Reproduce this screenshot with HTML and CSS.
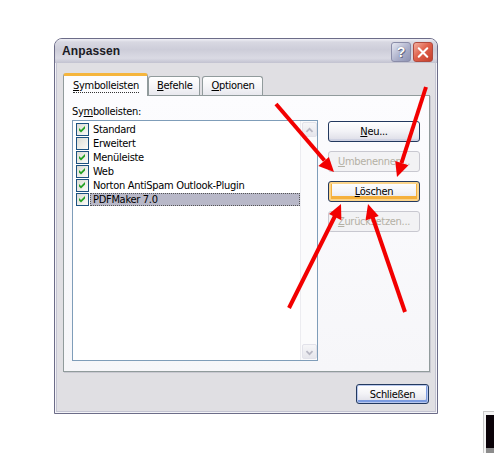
FILE: index.html
```html
<!DOCTYPE html>
<html lang="de">
<head>
<meta charset="utf-8">
<title>Anpassen</title>
<link rel="stylesheet" href="styles.css">
</head>
<body>
<div class="desktop">
  <div class="dialog">
    <div class="titlebar">
      <span class="title">Anpassen</span>
      <div class="tb-buttons">
        <span class="tb-btn help">?</span>
        <span class="tb-btn close"><svg width="19" height="19" viewBox="0 0 19 19"><path d="M5 5 L14 14 M14 5 L5 14" stroke="#fff" stroke-width="2.2" stroke-linecap="round"/></svg></span>
      </div>
    </div>
    <div class="body">
      <div class="tabs">
        <div class="tab active"><span class="focus"><u>S</u>ymbolleisten</span></div>
        <div class="tab"><u>B</u>efehle</div>
        <div class="tab"><u>O</u>ptionen</div>
      </div>
      <div class="panel">
        <div class="left">
          <div class="label">Sy<u>m</u>bolleisten:</div>
          <div class="list">
            <ul class="items">
              <li class="item"><span class="cb"><svg width="11" height="11" viewBox="0 0 11 11"><polygon points="2,4 4,6 8,2 8,4.5 4,8.5 2,6.5" fill="#21a121"/></svg></span><span class="text">Standard</span></li>
              <li class="item"><span class="cb"></span><span class="text">Erweitert</span></li>
              <li class="item"><span class="cb"><svg width="11" height="11" viewBox="0 0 11 11"><polygon points="2,4 4,6 8,2 8,4.5 4,8.5 2,6.5" fill="#21a121"/></svg></span><span class="text">Menüleiste</span></li>
              <li class="item"><span class="cb"><svg width="11" height="11" viewBox="0 0 11 11"><polygon points="2,4 4,6 8,2 8,4.5 4,8.5 2,6.5" fill="#21a121"/></svg></span><span class="text">Web</span></li>
              <li class="item"><span class="cb"><svg width="11" height="11" viewBox="0 0 11 11"><polygon points="2,4 4,6 8,2 8,4.5 4,8.5 2,6.5" fill="#21a121"/></svg></span><span class="text">Norton AntiSpam Outlook-Plugin</span></li>
              <li class="item selected"><span class="cb"><svg width="11" height="11" viewBox="0 0 11 11"><polygon points="2,4 4,6 8,2 8,4.5 4,8.5 2,6.5" fill="#21a121"/></svg></span><span class="text">PDFMaker 7.0</span></li>
            </ul>
            <div class="scrollbar">
              <span class="sb-btn"><svg width="15" height="15" viewBox="0 0 15 15"><polyline points="4,9 7.5,5.5 11,9" fill="none" stroke="#b8b8c4" stroke-width="2"/></svg></span>
              <span class="sb-btn"><svg width="15" height="15" viewBox="0 0 15 15"><polyline points="4,6 7.5,9.5 11,6" fill="none" stroke="#b8b8c4" stroke-width="2"/></svg></span>
            </div>
          </div>
        </div>
        <div class="buttons">
          <div class="btn"><span><u>N</u>eu...</span></div>
          <div class="btn disabled"><span><u>U</u>mbenennen...</span></div>
          <div class="btn hot"><span><u>L</u>öschen</span></div>
          <div class="btn disabled"><span><u>Z</u>urücksetzen...</span></div>
        </div>
      </div>
      <div class="footer">
        <div class="btn default small"><span>Schließen</span></div>
      </div>
    </div>
  </div>

  <div class="other-window"><div class="ow-inner"></div></div>

  <svg class="arrows" width="494" height="453" viewBox="0 0 494 453">
    <g stroke="#f20000" stroke-width="4" fill="none">
      <line x1="276" y1="104" x2="324.5" y2="160.5"/>
      <line x1="426" y1="87" x2="401.5" y2="163"/>
      <line x1="289" y1="308" x2="335.5" y2="215"/>
      <line x1="405" y1="312" x2="372.5" y2="217"/>
    </g>
    <g fill="#f20000">
      <polygon points="334,172 318.3,166.1 328.9,156.9"/>
      <polygon points="397,177 395.2,161.0 408.5,165.3"/>
      <polygon points="341,204 341.4,220.2 329.0,214.0"/>
      <polygon points="368,204 378.7,216.1 365.5,220.6"/>
    </g>
  </svg>
</div>
</body>
</html>
```

FILE: styles.css
```css
* { box-sizing: border-box; }
html, body { margin: 0; padding: 0; background: #fff; }
body {
  font-family: "DejaVu Sans Condensed", "DejaVu Sans", sans-serif;
  font-stretch: condensed;
  font-size: 11px;
  letter-spacing: -0.3px;
  color: #000;
}
.desktop {
  position: relative;
  width: 494px;
  height: 453px;
  overflow: hidden;
  padding: 38px 0 0 54px;
}
.dialog {
  width: 384px;
  height: 376px;
  border: 1px solid #6c6c88;
  border-radius: 8px 8px 0 0;
  background: #e0dfe3;
  box-shadow: inset 0 0 0 1px #f4f4f8, inset 0 0 0 2px #c4c4d2;
  display: flex;
  flex-direction: column;
}
.titlebar {
  height: 24px;
  border-radius: 7px 7px 0 0;
  background: linear-gradient(#f0f0f6 0, #d8d8e2 3px, #cdcdd9 45%, #dadae4 80%, #c2c2d0 100%);
  display: flex;
  align-items: flex-start;
  justify-content: space-between;
  padding: 0 4px 0 7px;
}
.title {
  font-family: "Liberation Sans", sans-serif;
  font-stretch: normal;
  font-weight: bold;
  font-size: 12px;
  line-height: 25px;
  color: #1a1a24;
  letter-spacing: 0.1px;
}
.tb-buttons {
  display: flex;
  gap: 2px;
  padding-top: 3px;
}
.tb-btn {
  width: 20px;
  height: 20px;
  border-radius: 3px;
  display: flex;
  align-items: center;
  justify-content: center;
}
.help {
  border: 1px solid #8a8ca8;
  background: linear-gradient(135deg, #e6e8f2, #a9adc8 60%, #8e93b4);
  color: #fff;
  font-family: "Liberation Sans", sans-serif;
  font-weight: bold;
  font-size: 14px;
  letter-spacing: 0;
  text-shadow: 0 0 1px #50546e, 1px 1px 0 #6a6e8c;
}
.close {
  border: 1px solid #b04a3e;
  background: linear-gradient(135deg, #f3b0a0, #e0624c 45%, #c43e2c);
}
.body {
  flex: 1;
  padding: 10px 7px 0 8px;
  display: flex;
  flex-direction: column;
}
.tabs {
  display: flex;
  align-items: flex-end;
  height: 22px;
  position: relative;
  z-index: 1;
}
.tab {
  height: 19px;
  line-height: 18px;
  padding: 0 7px 0 8px;
  border: 1px solid #919b9c;
  border-bottom: none;
  border-radius: 3px 3px 0 0;
  background: linear-gradient(#ffffff, #f3f3f6 60%, #e8e8ee);
  margin-left: 2px;
}
.tab.active {
  height: 23px;
  margin-bottom: -1px;
  margin-left: 0;
  margin-right: -1px;
  width: 85px;
  padding: 0 8px 0 9px;
  background: #fcfcfe;
  border-top: 3px solid #f5b53c;
  line-height: 19px;
}
.tab.active + .tab { margin-left: 1px; }
.focus { border-bottom: 1px dotted #333; }
.panel {
  width: 367px;
  height: 277px;
  border: 1px solid #919b9c;
  background: linear-gradient(#fcfcfe, #f6f6f9);
  box-shadow: 1px 1px 0 #c8c8d0;
  display: flex;
  padding: 9px 9px 10px 8px;
  gap: 10px;
}
.left { display: flex; flex-direction: column; }
.label { line-height: 13px; height: 13px; margin-bottom: 2px; }
.list {
  width: 246px;
  height: 241px;
  border: 1px solid #7f9db9;
  background: #fff;
  display: flex;
}
.items {
  list-style: none;
  margin: 0;
  padding: 1px 0 0 3px;
  flex: 1;
}
.item {
  display: flex;
  align-items: center;
  height: 14px;
}
.cb {
  width: 13px;
  height: 13px;
  border: 1px solid #1c5180;
  background: linear-gradient(135deg, #dcdcd4, #fbfbf8);
  display: flex;
  align-items: center;
  justify-content: center;
}
.text {
  flex: 1;
  height: 13px;
  line-height: 12px;
  padding-left: 2px;
  margin-left: 1px;
  border: 1px solid transparent;
}
.item.selected .text {
  background: #b8b8c8;
  border: 1px dotted #555;
}
.scrollbar {
  width: 17px;
  border-left: 1px solid #ececf0;
  background: #fbfbfc;
  display: flex;
  flex-direction: column;
  justify-content: space-between;
  padding: 1px;
}
.sb-btn {
  width: 15px;
  height: 15px;
  border-radius: 2px;
  border: 1px solid #e2e2ea;
  background: linear-gradient(#f6f6f8, #e6e6ec);
  display: flex;
}
.buttons {
  display: flex;
  flex-direction: column;
  gap: 9px;
  padding-top: 16px;
}
.btn {
  width: 92px;
  height: 21px;
  border: 1px solid #23395f;
  border-radius: 3px;
  background: linear-gradient(#ffffff, #f2f2f6 50%, #dcdce6);
  box-shadow: inset 0 -2px 0 #cfd2e2;
  display: flex;
  align-items: center;
  justify-content: center;
  line-height: 13px;
}
.btn.disabled {
  border-color: #c8c8d0;
  background: #f2f2f4;
  box-shadow: none;
  color: #b4b0a4;
}
.btn.hot {
  box-shadow: inset 0 0 0 2px #fbd48a, inset 0 -2px 0 3px #f5b03c;
  background: linear-gradient(#ffffff, #f4f4f8 50%, #e2e2ea);
}
.btn.default {
  box-shadow: inset 0 0 0 1px #b8c8ee, inset -1px -2px 0 1px #7b9be0;
}
.btn.small { width: 73px; height: 20px; }
.footer {
  display: flex;
  justify-content: flex-end;
  padding: 12px 1px 0 0;
}
.other-window {
  position: absolute;
  left: 483px;
  top: 411px;
  width: 11px;
  height: 42px;
  border-left: 1px solid #c8c8c8;
  border-top: 1px solid #c8c8c8;
  padding: 3px 0 0 2px;
  background: #f4f4f4;
}
.ow-inner {
  height: 33px;
  background: #0a0208;
  box-shadow: 0 5px 0 #8c8c8c;
}
.arrows {
  position: absolute;
  left: 0;
  top: 0;
  pointer-events: none;
}
```
